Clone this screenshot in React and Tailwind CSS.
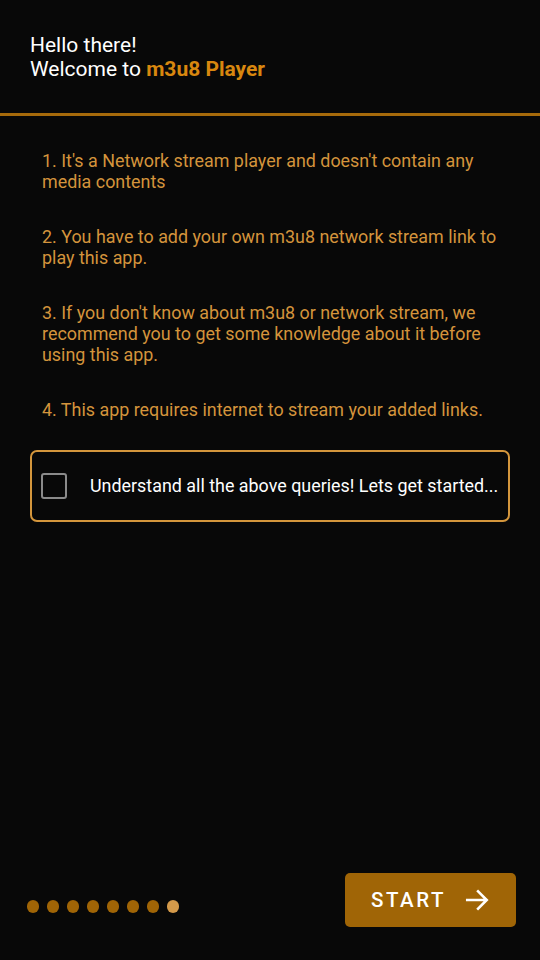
import React from "react";

export default function App() {
  const items = [
    "1. It's a Network stream player and doesn't contain any media contents",
    "2. You have to add your own m3u8 network stream link to play this app.",
    "3. If you don't know about m3u8 or network stream, we recommend you to get some knowledge about it before using this app.",
    "4. This app requires internet to stream your added links.",
  ];
  return (
    <div className="w-[540px] h-[960px] bg-[#080808] flex flex-col" style={{ fontFamily: "Roboto, sans-serif" }}>
      <div className="h-[113px] px-[30px] pt-[33px] text-white text-[21px] leading-[24px]">
        <div>Hello there!</div>
        <div>
          Welcome to <span className="font-bold text-[#d8870f]">m3u8 Player</span>
        </div>
      </div>
      <div className="h-[3px] bg-[#a66a0b]" />
      <div className="pl-[42px] pr-[30px] pt-[34px] flex flex-col gap-[34px] text-[#d4943c] text-[17.9px] leading-[21px]">
        {items.map((t, i) => (
          <p key={i}>{t}</p>
        ))}
      </div>
      <div className="mx-[30px] mt-[30px] h-[72px] border-2 border-[#d4963c] rounded-[7px] flex items-center pl-[9px]">
        <div className="w-[26px] h-[26px] border-[2.5px] border-[#8a8a8a] rounded-[3px]" />
        <span className="ml-[23px] text-white text-[17.9px] whitespace-nowrap">Understand all the above queries! Lets get started...</span>
      </div>
      <div className="flex-1" />
      <div className="flex items-center justify-between pl-[27px] pr-[24px] pb-[33px]">
        <div className="flex gap-[8px] mt-[12px]">
          {[0, 1, 2, 3, 4, 5, 6, 7].map((i) => (
            <div key={i} className={`w-[12px] h-[13px] rounded-full ${i === 7 ? "bg-[#d49a4a]" : "bg-[#a06506]"}`} />
          ))}
        </div>
        <div className="w-[171px] h-[54px] bg-[#a06506] rounded-[5px] flex items-center justify-center gap-[18px] text-white">
          <span className="text-[20.5px] font-medium tracking-[2.5px]">START</span>
          <svg width="26" height="26" viewBox="0 0 24 24" fill="none" stroke="white" strokeWidth="2.4" strokeLinecap="square">
            <path d="M3 12h17M13 4l8 8-8 8" />
          </svg>
        </div>
      </div>
    </div>
  );
}
